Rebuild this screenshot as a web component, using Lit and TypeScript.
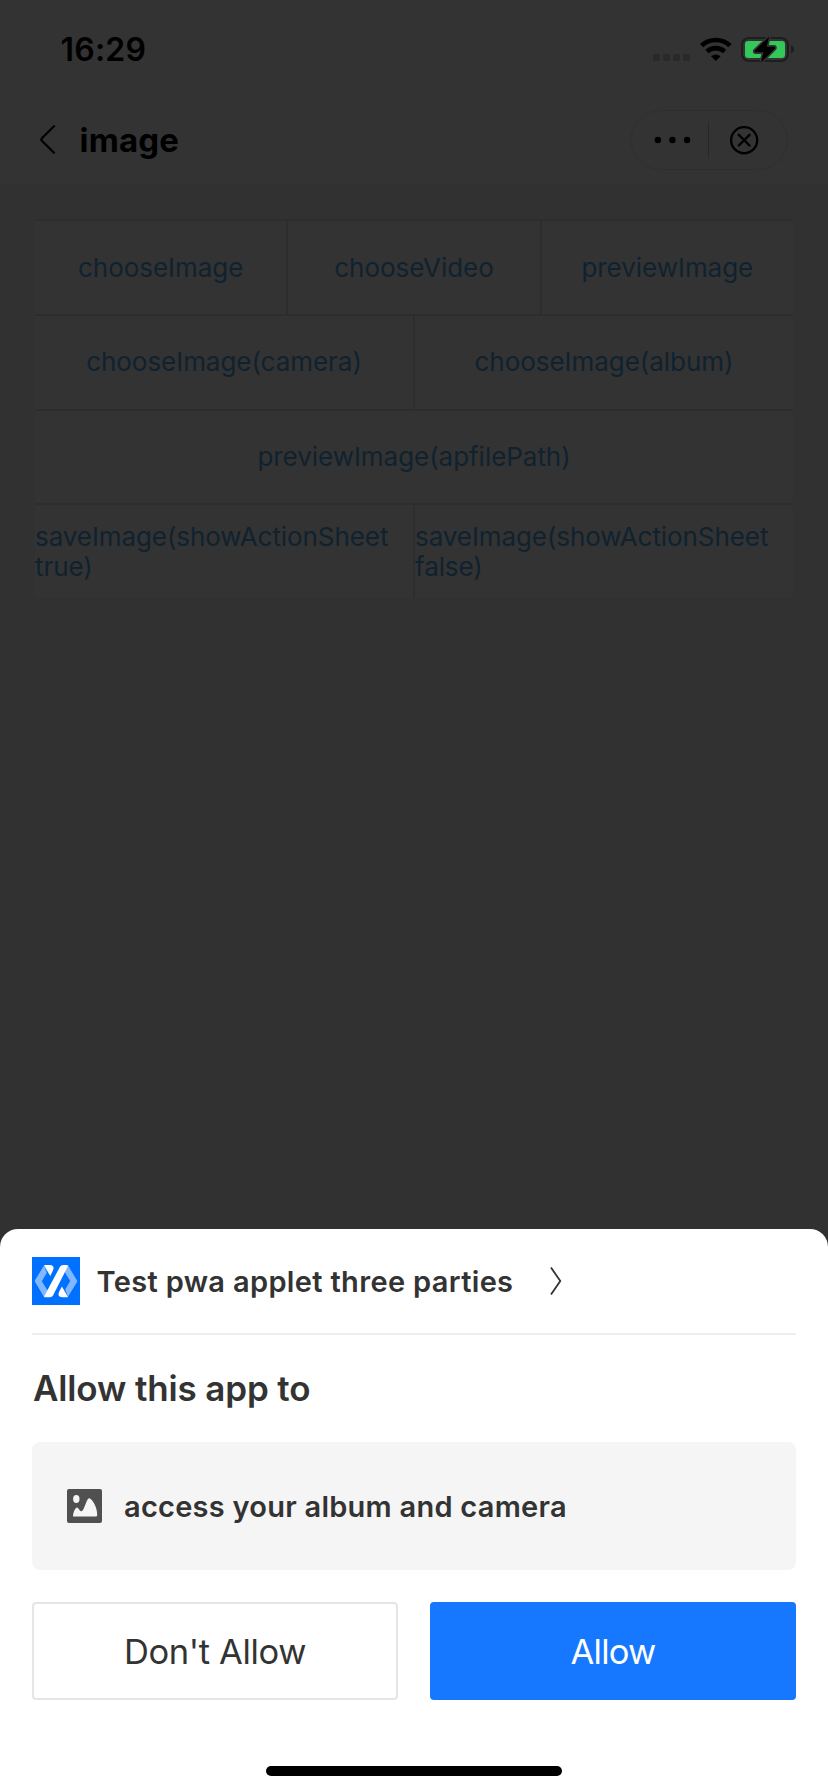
import { LitElement, html, css } from "lit";
import { customElement } from "lit/decorators.js";
import { classMap } from "lit/directives/class-map.js";

const ROWS: string[][] = [
  ["chooseImage", "chooseVideo", "previewImage"],
  ["chooseImage(camera)", "chooseImage(album)"],
  ["previewImage(apfilePath)"],
  ["saveImage(showActionSheet true)", "saveImage(showActionSheet false)"],
];

@customElement("status-bar")
class StatusBar extends LitElement {
  static styles = css`
    :host { display: flex; align-items: center; justify-content: space-between; height: 99px; padding: 0 34px 0 60.5px; box-sizing: border-box; color: #000; }
    .time { font-size: 32px; font-weight: 600; letter-spacing: 0.2px; line-height: 40px; }
    .icons { display: flex; align-items: center; gap: 9px; }
    svg { display: block; }
  `;
  render() {
    return html`
      <div class="time">16:29</div>
      <div class="icons">
        <svg width="38" height="29" viewBox="0 0 38 29" fill="#292929">
          <rect x="0" y="19" width="7" height="7" rx="2" /><rect x="10" y="19" width="7" height="7" rx="2" />
          <rect x="20" y="19" width="7" height="7" rx="2" /><rect x="30" y="19" width="7" height="7" rx="2" />
        </svg>
        <svg width="32" height="29" viewBox="0 -2 32 29" fill="none" stroke="#000">
          <path d="M1.6 8.6A20.8 20.8 0 0 1 30 8.6" stroke-width="4.6" />
          <path d="M7 14.6A12.8 12.8 0 0 1 24.6 14.6" stroke-width="4.6" />
          <path d="M11 19.3Q15.8 15.6 20.6 19.3L15.8 24Z" fill="#000" stroke="none" />
        </svg>
        <svg width="53" height="29" viewBox="0 0 53 29">
          <rect x="1" y="3" width="46" height="23" rx="7" fill="none" stroke="#1e1e1e" stroke-width="2" />
          <rect x="4" y="6" width="40" height="17" rx="3.2" fill="#34c759" />
          <path d="M50 10.3Q53 11.5 53 14.5T50 18.3Z" fill="#1e1e1e" />
          <path d="M28.2 1.6L13.7 15.6Q13.2 17.3 14.6 17.3H22.5L20 27.4L34 13.4Q34.4 11.8 33.2 11.8H25.6Z" fill="#000" stroke="#333" stroke-width="3.4" paint-order="stroke" />
        </svg>
      </div>
    `;
  }
}

@customElement("nav-bar")
class NavBar extends LitElement {
  static styles = css`
    :host { display: flex; align-items: center; height: 85px; padding: 0 40px 3px 39px; box-sizing: border-box; color: #000; }
    svg { display: block; }
    .title { flex: 1; margin: 0 0 1px 23.5px; font-size: 33px; font-weight: 700; letter-spacing: 0.2px; line-height: 42px; }
    .capsule { display: flex; align-items: center; width: 158px; height: 60px; box-sizing: border-box; border: 1px solid #2f2f2f; border-radius: 30px; padding: 0 27px 0 23px; }
    .rule { width: 1px; height: 36px; background: #282828; margin: 0 20px 0 17px; }
  `;
  render() {
    return html`
      <svg width="17" height="32" viewBox="0 0 17 32" fill="none" stroke="#000" stroke-width="2.2" stroke-linecap="round" stroke-linejoin="round">
        <path d="M15 2.2L3.1 14Q1.6 15.5 3.1 17L15 28.8" />
      </svg>
      <div class="title">image</div>
      <div class="capsule">
        <svg width="38" height="8" viewBox="0 0 38 8"><circle cx="4" cy="4" r="3.3" /><circle cx="19" cy="4" r="3.3" /><circle cx="34" cy="4" r="3.3" /></svg>
        <div class="rule"></div>
        <svg width="32" height="32" viewBox="0 0 32 32" fill="none" stroke="#000" stroke-width="2.4" stroke-linecap="round">
          <circle cx="15.6" cy="16.2" r="13.4" /><path d="M10.1 10.7L21.1 21.7M21.1 10.7L10.1 21.7" />
        </svg>
      </div>
    `;
  }
}

@customElement("api-grid")
class ApiGrid extends LitElement {
  static styles = css`
    :host { display: flex; flex-direction: column; gap: 2px; height: 379px; margin: 35px 35px 0; padding-top: 2px; box-sizing: border-box; background: #2d2d2d; color: #10222f; font-size: 26px; line-height: 30px; letter-spacing: -0.04px; }
    .row { display: flex; flex: 1; gap: 2px; }
    .cell { display: flex; flex: 1 1 0; min-width: 0; align-items: center; justify-content: center; background: #333; }
    .row:first-of-type .cell { padding-top: 1px; }
    .wrap { letter-spacing: -0.08px; }
  `;
  render() {
    return ROWS.map(
      (row) => html`<div class="row">
        ${row.map((label) => html`<div class=${classMap({ cell: true, wrap: label.includes(" ") })}><span>${label}</span></div>`)}
      </div>`
    );
  }
}

@customElement("permission-sheet")
class PermissionSheet extends LitElement {
  static styles = css`
    :host { display: flex; flex-direction: column; height: 563px; box-sizing: border-box; padding: 0 32px 16px; background: #fff; border-radius: 18px 18px 0 0; color: #333; }
    svg { display: block; flex: none; }
    .app { display: flex; align-items: center; height: 106px; box-sizing: border-box; border-bottom: 2px solid #eee; }
    .name { margin-left: 16.5px; padding-top: 1px; font-size: 29px; font-weight: 570; letter-spacing: 0.34px; line-height: 36px; }
    .chevron { margin-left: 37px; }
    .heading { display: flex; align-items: center; height: 107px; box-sizing: border-box; padding: 0 0 2px 1px; font-size: 35px; font-weight: 570; letter-spacing: -0.14px; }
    .scope { display: flex; align-items: center; gap: 22px; height: 128px; box-sizing: border-box; padding-left: 35px; border-radius: 8px; background: #f5f5f5; font-size: 29px; font-weight: 580; letter-spacing: 0.25px; }
    .buttons { display: grid; grid-template-columns: 1fr 1fr; gap: 32px; margin-top: 32px; }
    button { height: 98px; padding: 0; border: 2px solid #e5e5e5; border-radius: 4px; background: #fff; color: #333; font-family: inherit; font-size: 34.5px; letter-spacing: -0.36px; }
    .primary { border-color: #1677ff; background: #1677ff; color: #fff; letter-spacing: -0.8px; }
    .home { width: 296px; height: 10px; margin: auto auto 0; border-radius: 5px; background: #000; }
  `;
  render() {
    return html`
      <div class="app">
        <svg width="48" height="48" viewBox="0 0 48 48">
          <rect width="48" height="48" fill="#0070ff" />
          <path d="M12 8.5L3 23.2Q2.6 24 3 24.8L12 40L15.5 33.5L9.8 24.2L14.8 15.8Z" fill="#80b7ff" />
          <path d="M36 39.8L45 25.1Q45.4 24.3 45 23.5L36 8.3L32.5 14.8L38.2 24.1L33.2 32.5Z" fill="#80b7ff" />
          <path d="M12 8.4Q12.3 8 13 8H18Q23 8.6 21 13.2L18.3 19Z" fill="#fff" />
          <path d="M36 39.9Q35.7 40.2 35 40.2H30Q25 39.7 27 35L29.9 29.6Z" fill="#fff" />
          <path d="M28 9.8Q29 8 31 8H35Q36.3 8.2 35.8 9.4L21 38.4Q20 40.2 18 40.2H13Q11.7 40.2 12.3 39Z" fill="#fff" />
        </svg>
        <div class="name">Test pwa applet three parties</div>
        <svg class="chevron" width="12" height="28" viewBox="0 0 12 28" fill="none" stroke="#333" stroke-width="1.8"><path d="M1 0.6L10.3 14L1 27.4" /></svg>
      </div>
      <div class="heading">Allow this app to</div>
      <div class="scope">
        <svg width="35" height="34" viewBox="0 0 35 34">
          <rect width="35" height="34" rx="2" fill="#505050" />
          <ellipse cx="9.3" cy="10" rx="3.2" ry="4" fill="#f5f5f5" />
          <path d="M6 27.3C6.4 22 8.8 18.2 10 18.4C11.5 18.6 12.8 22.3 14.5 22.3C17.6 21.5 19.3 9.3 22.2 9.3C25.2 9.5 30.5 18.5 30.2 26.2Q30 27.4 29 27.4H7Q6 27.6 6 27.3Z" fill="#f5f5f5" />
        </svg>
        <span>access your album and camera</span>
      </div>
      <div class="buttons">
        <button>Don't Allow</button>
        <button class="primary">Allow</button>
      </div>
      <div class="home"></div>
    `;
  }
}

@customElement("app-root")
class AppRoot extends LitElement {
  static styles = css`
    :host { display: flex; flex-direction: column; width: 828px; height: 1792px; background: #313131; font-family: Inter, "Noto Sans", sans-serif; overflow: hidden; }
    .header { background: #333; }
    .content { flex: 1; }
  `;
  render() {
    return html`
      <div class="header"><status-bar></status-bar><nav-bar></nav-bar></div>
      <div class="content"><api-grid></api-grid></div>
      <permission-sheet></permission-sheet>
    `;
  }
}
